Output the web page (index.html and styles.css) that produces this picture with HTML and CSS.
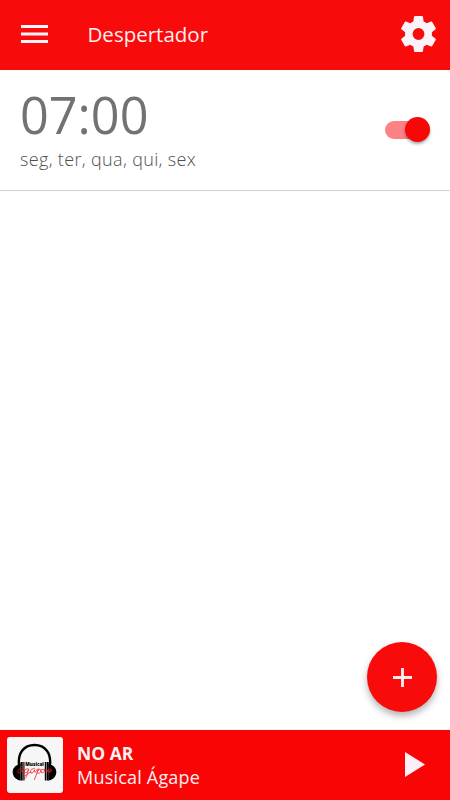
FILE: index.html
```html
<!DOCTYPE html>
<html lang="pt-BR">
<head>
<meta charset="utf-8">
<title>Despertador</title>
<link rel="stylesheet" href="styles.css">
</head>
<body>
<div class="app">
  <header class="toolbar">
    <svg class="menu" viewBox="0 0 27 18" aria-hidden="true"><path d="M0 0h27v3H0zM0 7.5h27v3H0zM0 15h27v3H0z"/></svg>
    <h1 class="title">Despertador</h1>
    <svg class="gear" viewBox="0 0 24 24" aria-hidden="true"><path d="M19.43 12.98c.04-.32.07-.64.07-.98s-.03-.66-.07-.98l2.11-1.65c.19-.15.24-.42.12-.64l-2-3.46c-.12-.22-.39-.3-.61-.22l-2.49 1c-.52-.4-1.08-.73-1.69-.98l-.38-2.65C14.46 2.18 14.25 2 14 2h-4c-.25 0-.46.18-.49.42l-.38 2.65c-.61.25-1.17.59-1.69.98l-2.49-1c-.23-.09-.49 0-.61.22l-2 3.46c-.13.22-.07.49.12.64l2.11 1.65c-.04.32-.07.65-.07.98s.03.66.07.98l-2.11 1.65c-.19.15-.24.42-.12.64l2 3.46c.12.22.39.3.61.22l2.49-1c.52.4 1.08.73 1.69.98l.38 2.65c.03.24.24.42.49.42h4c.25 0 .46-.18.49-.42l.38-2.65c.61-.25 1.17-.59 1.69-.98l2.49 1c.23.09.49 0 .61-.22l2-3.46c.12-.22.07-.49-.12-.64l-2.11-1.65zM12 15.3a3.3 3.3 0 1 1 0-6.6 3.3 3.3 0 0 1 0 6.6z"/></svg>
  </header>
  <main class="content">
    <section class="alarm">
      <div>
        <div class="time">07:00</div>
        <div class="days">seg, ter, qua, qui, sex</div>
      </div>
      <div class="switch"><span class="thumb"></span></div>
    </section>
    <button class="fab" aria-label="Adicionar"><svg viewBox="0 0 20 20"><path d="M8.500 0h3v8.500H20v3h-8.500V20h-3v-8.500H0v-3h8.500z"/></svg></button>
  </main>
  <footer class="player">
    <div class="cover">
      <svg viewBox="0 0 56 56" aria-hidden="true">
        <path class="band" d="M12.300 30C10 16 17 8 27.500 8S45 16 42.700 30"/>
        <path d="M13.500 27C8 28 5.500 31.500 5.700 35.500S9 43 13.500 43.500zM41.500 27c5.500 1 8 4.500 7.800 8.500S46 43 41.500 43.500z"/>
        <path d="M13.500 25h2.200v18.500h-2.200zM16.300 25h1.200v18.500h-1.200zM37.800 25H39v18.500h-1.200zM39.500 25h2.200v18.500h-2.200z"/>
        <text class="logo-name" x="18.300" y="28.900" textLength="18.600" lengthAdjust="spacingAndGlyphs">Musical</text>
        <g class="script">
          <path d="M15.500 32c-3-1-5 1-4.500 3s3 1 4-2c-.5 3 1 3 3 0M14 30l1.500-1"/>
          <path d="M21.500 32c-3-1-5 2-3.500 3.500 2 1 3-2 3.500-3-1 5-3 10-4.500 9.500s1.500-5 7-7"/>
          <path d="M28 32c-3-1-5 1-4.500 3s3 1 4-2c-.5 3 1 3 3-1M31.500 32l-4 10.500M30.500 34c2-3 4-2 3.500 0s-2 3-4 2"/>
          <path d="M38 32.500c-3-1-4.500 1-4 2.500s3 1 4-2c-.5 3 1 3 3 0M40.500 34.500c3 0 4.500-2 3-2.500s-3 1-2.500 2.500 3 .5 4-1"/>
        </g>
      </svg>
    </div>
    <div class="track"><div class="live">NO AR</div><div class="name">Musical Ágape</div></div>
    <svg class="play" viewBox="0 0 20 25" aria-hidden="true"><path d="M0 0v25l20-12.500z"/></svg>
  </footer>
</div>
</body>
</html>
```
FILE: styles.css
```css
* { box-sizing: border-box; }
body { margin: 0; background: #fff; font-family: "Open Sans", "Noto Sans", sans-serif; }
.app { height: 800px; display: flex; flex-direction: column; overflow: hidden; }
.toolbar { height: 70px; flex: none; display: flex; align-items: center; padding: 0 10px 0 21px; background: #f90b0b; color: #fdf0f4; }
.menu { width: 27px; height: 18px; margin-top: -2px; fill: #fdf3f8; }
.title { margin: -2px auto 0 39.5px; font-size: 20.5px; line-height: 28px; font-weight: 400; }
.gear { width: 43px; height: 44px; margin-top: -2px; fill: #fbf3fa; }
.content { flex: 1; position: relative; }
.alarm { height: 121px; display: flex; justify-content: space-between; padding: 11px 20px 0; border-bottom: 1px solid #d2d2d2; }
.time { height: 67px; font-size: 50.4px; line-height: 68px; color: #727274; }
.days { font-size: 18px; line-height: 22px; font-weight: 350; color: #505052; letter-spacing: .34px; }
.switch { width: 43px; height: 18px; margin: 40px 2px 0 0; border-radius: 9px; background: #fa8285; position: relative; }
.thumb { position: absolute; top: -4px; right: -2px; width: 25px; height: 25px; border-radius: 50%; background: #f90606; box-shadow: 0 2px 3px rgba(0,0,0,.35); }
.fab { position: absolute; right: 13px; bottom: 17px; width: 70px; height: 70px; padding: 0; border: 0; border-radius: 50%; background: #f90b0b; display: grid; place-items: center; box-shadow: 0 4px 7px rgba(0,0,0,.3); }
.fab svg { width: 19px; height: 19px; fill: #fdeef2; }
.player { height: 71px; flex: none; display: flex; align-items: center; padding: 0 25px 0 7px; border-top: 1px solid #f4f6f5; background: #f90505; color: #fdf0f4; }
.cover { width: 56px; height: 56px; border-radius: 3px; background: #f6f6f6; }
.cover svg { display: block; width: 56px; height: 56px; }
.band { fill: none; stroke: #000; stroke-width: 2.4; }
.logo-name { font: 800 4.8px "Open Sans", sans-serif; }
.script path { fill: none; stroke: #f31d25; stroke-width: .8; stroke-linecap: round; }
.track { margin: 0 auto 0 14px; }
.live { font-size: 17.5px; line-height: 24px; font-weight: 700; }
.name { font-size: 18px; line-height: 24px; letter-spacing: .2px; }
.play { width: 20px; height: 25px; margin-top: -2px; fill: #fbf0f7; }
```
